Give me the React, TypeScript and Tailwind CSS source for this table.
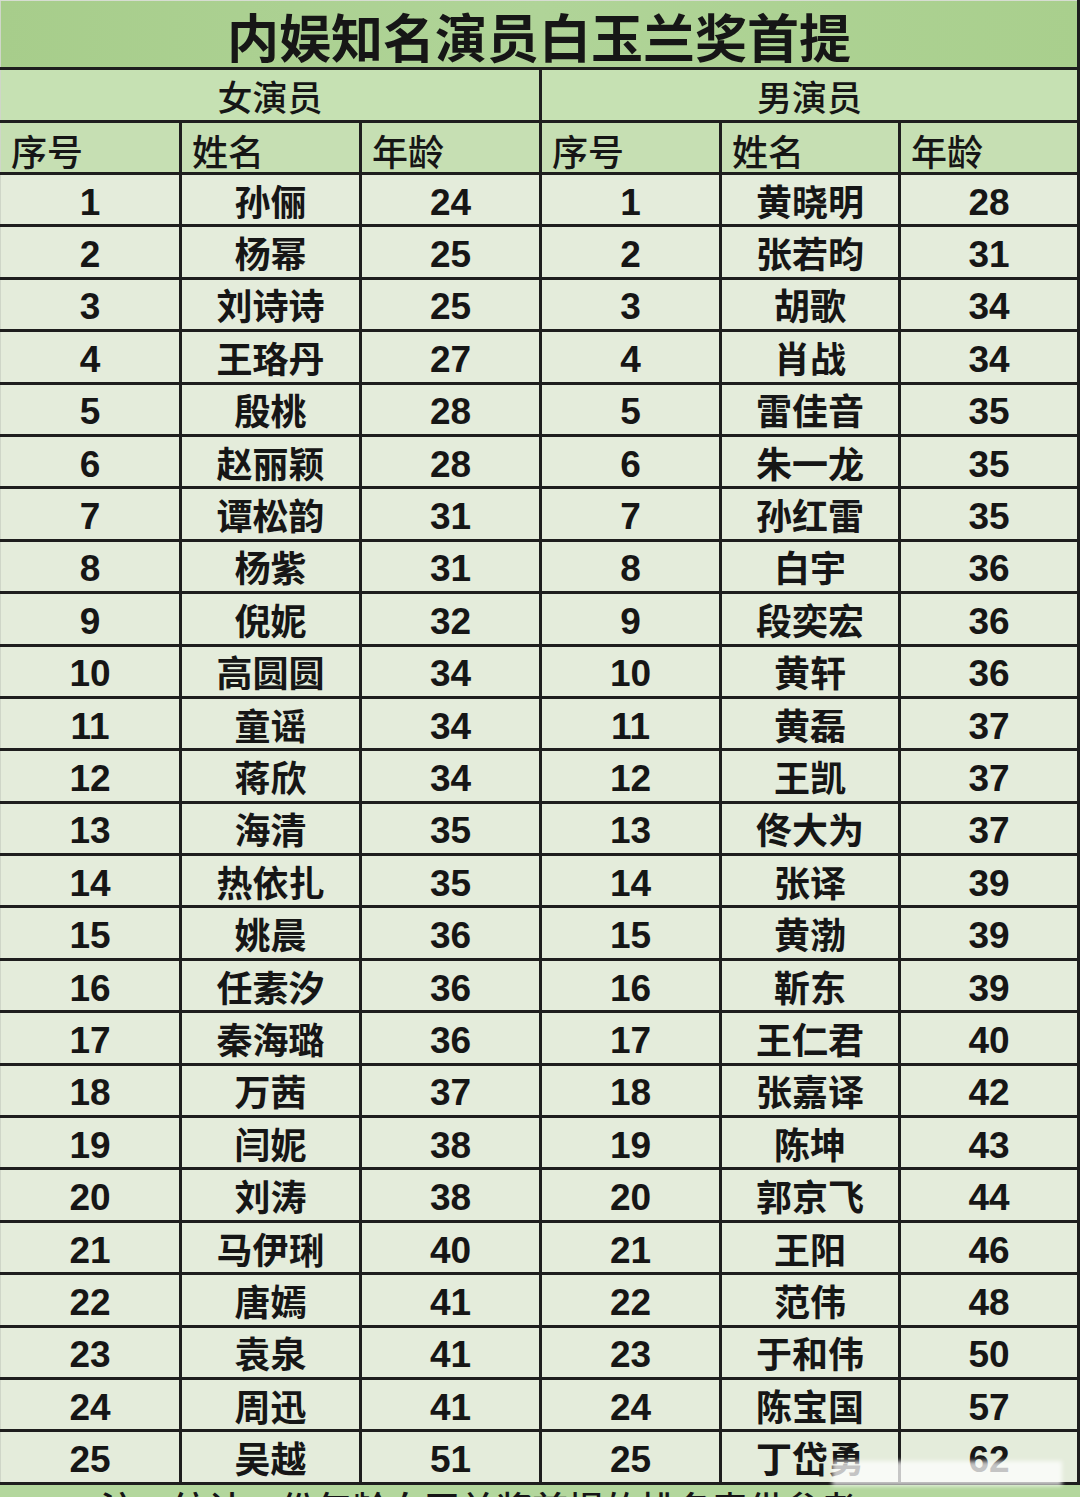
import React from "react";

const actresses: [string, number][] = [
  ["孙俪", 24], ["杨幂", 25], ["刘诗诗", 25], ["王珞丹", 27], ["殷桃", 28],
  ["赵丽颖", 28], ["谭松韵", 31], ["杨紫", 31], ["倪妮", 32], ["高圆圆", 34],
  ["童谣", 34], ["蒋欣", 34], ["海清", 35], ["热依扎", 35], ["姚晨", 36],
  ["任素汐", 36], ["秦海璐", 36], ["万茜", 37], ["闫妮", 38], ["刘涛", 38],
  ["马伊琍", 40], ["唐嫣", 41], ["袁泉", 41], ["周迅", 41], ["吴越", 51],
];

const actors: [string, number][] = [
  ["黄晓明", 28], ["张若昀", 31], ["胡歌", 34], ["肖战", 34], ["雷佳音", 35],
  ["朱一龙", 35], ["孙红雷", 35], ["白宇", 36], ["段奕宏", 36], ["黄轩", 36],
  ["黄磊", 37], ["王凯", 37], ["佟大为", 37], ["张译", 39], ["黄渤", 39],
  ["靳东", 39], ["王仁君", 40], ["张嘉译", 42], ["陈坤", 43], ["郭京飞", 44],
  ["王阳", 46], ["范伟", 48], ["于和伟", 50], ["陈宝国", 57], ["丁岱勇", 62],
];

const cjk = "font-['Noto_Sans_CJK_SC',sans-serif]";
const num = "font-['Liberation_Sans','Noto_Sans_CJK_SC',sans-serif] font-bold pt-[5px] text-[37px] leading-none";
const name = `text-[36px] leading-none font-bold ${cjk}`;
const cell = "border-[3px] border-[#1e1e1e] text-center align-middle p-0";

export default function App() {
  return (
    <div className="w-[1080px] h-[1497px] overflow-hidden bg-[#e4ecdb] relative">
      <table className="table-fixed border-collapse w-[1078px] border-l border-l-[#cfd6c8] text-[#161616]">
        <colgroup>
          <col className="w-[180px]" />
          <col className="w-[180px]" />
          <col className="w-[180px]" />
          <col className="w-[180px]" />
          <col className="w-[179px]" />
          <col className="w-[179px]" />
        </colgroup>
        <tbody>
          <tr className="h-[68px] bg-gradient-to-r from-[#a7cd8b] via-[#b0d498] to-[#a9cf8d]">
            <td colSpan={6} className={`border-b-[3px] border-r-[3px] border-[#1e1e1e] border-t border-t-[#d7ddd2] text-center px-0 pt-[4px] pb-0 text-[52px] leading-[1.1] font-semibold ${cjk}`}>
              内娱知名演员白玉兰奖首提
            </td>
          </tr>
          <tr className="h-[53px] bg-[#c6e1b3]">
            <td colSpan={3} className={`border-[3px] border-[#1e1e1e] border-l-0 text-center text-[35px] leading-none font-medium ${cjk}`}>
              女演员
            </td>
            <td colSpan={3} className={`border-[3px] border-[#1e1e1e] text-center text-[35px] leading-none font-medium ${cjk}`}>
              男演员
            </td>
          </tr>
          <tr className="h-[52px] bg-[#c6dfb3]">
            {["序号", "姓名", "年龄", "序号", "姓名", "年龄"].map((h, i) => (
              <td
                key={i}
                className={`${cell} ${i === 0 ? "border-l-0" : ""} text-left pl-[10px] pt-[4px] text-[36px] leading-none font-medium ${cjk}`}
              >
                {h}
              </td>
            ))}
          </tr>
          {actresses.map(([fn, fa], i) => {
            const [mn, ma] = actors[i];
            return (
              <tr key={i} className="h-[52.4px] bg-[#e4ecdb]">
                <td className={`${cell} border-l-0 ${num}`}>{i + 1}</td>
                <td className={`${cell} ${name}`}>{fn}</td>
                <td className={`${cell} ${num}`}>{fa}</td>
                <td className={`${cell} ${num}`}>{i + 1}</td>
                <td className={`${cell} ${name}`}>{mn}</td>
                <td className={`${cell} ${num}`}>{ma}</td>
              </tr>
            );
          })}
        </tbody>
      </table>
      <div className={`h-[40px] bg-[#b3d79d] pl-[100px] pt-[4px] text-[36px] leading-none font-medium whitespace-nowrap text-[#161616] ${cjk}`}>
        注：统计一份年龄白玉兰奖首提的排名表供参考
      </div>
      <div className="absolute left-[832px] top-[1461px] w-[230px] h-[25px] bg-white/75 blur-[2px]" />
    </div>
  );
}
